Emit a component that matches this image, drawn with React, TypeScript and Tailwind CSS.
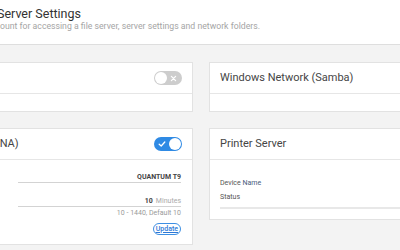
import React from "react";

const Toggle = ({ on }: { on: boolean }) => {
  if (on) {
    return (
      <div className="flex items-center w-[28px] h-[14px] rounded-full bg-[#2f8ae4] px-[1px]">
        <svg viewBox="0 0 10 10" className="w-[8px] h-[8px] ml-[3px]" fill="none">
          <path d="M1.5 5.2 L4 7.5 L8.5 2.5" stroke="#fff" strokeWidth="1.6" strokeLinecap="round" strokeLinejoin="round" />
        </svg>
        <div className="ml-auto w-[12px] h-[12px] rounded-full bg-white" />
      </div>
    );
  }
  return (
    <div className="flex items-center w-[28px] h-[14px] rounded-full bg-[#cdcdcd] px-[1px]">
      <div className="w-[12px] h-[12px] rounded-full bg-white" />
      <svg viewBox="0 0 10 10" className="w-[7px] h-[7px] ml-[3px]" fill="none">
        <path d="M2 2 L8 8 M8 2 L2 8" stroke="#fff" strokeWidth="1.8" strokeLinecap="round" />
      </svg>
    </div>
  );
};

const CardHeader = ({ title, toggle }: { title: string; toggle?: boolean }) => (
  <div className="flex items-center h-[31px] px-[10px] border-b border-[#e6e6e6]">
    <span className="text-[11px] text-[#454545] whitespace-nowrap">{title}</span>
    {toggle !== undefined && (
      <div className="ml-auto">
        <Toggle on={toggle} />
      </div>
    )}
  </div>
);

export default function App() {
  return (
    <div
      className="w-[400px] h-[250px] overflow-hidden bg-[#f3f3f3]"
      style={{ fontFamily: "Roboto, 'Liberation Sans', sans-serif" }}
    >
      {/* Page header */}
      <div className="h-[45px] bg-white border-b border-[#dedede] pt-[6px]">
        <div className="-ml-[3px] text-[12.5px] leading-[15px] text-[#333] whitespace-nowrap">
          Server Settings
        </div>
        <div className="grid grid-cols-[0px_auto] text-[8.7px] leading-[10px] text-[#a5a5a5] whitespace-nowrap">
          <span className="justify-self-end">Set up the user acc</span>
          <span>ount for accessing a file server, server settings and network folders.</span>
        </div>
      </div>

      {/* Cards */}
      <div className="-ml-[95px] pt-[17px] grid grid-cols-[288px_293px] gap-4 items-start">
        {/* FTP */}
        <div className="bg-white border border-[#e2e2e2]">
          <CardHeader title="FTP Server" toggle={false} />
          <div className="h-[17px]" />
        </div>

        {/* Samba */}
        <div className="bg-white border border-[#e2e2e2]">
          <CardHeader title="Windows Network (Samba)" />
          <div className="h-[17px]" />
        </div>

        {/* DLNA */}
        <div className="bg-white border border-[#e2e2e2]">
          <CardHeader title="Media Server (DLNA)" toggle={true} />
          <div className="px-[11px] pt-[8px] pb-[9px] text-[7px]">
            <div className="flex">
              <span className="w-[101px] self-end pb-[1px] text-[#666]">Server Name</span>
              <div className="flex-1 h-[15px] flex items-end justify-end pb-[1px] border-b border-[#d3d3d3]">
                <span className="font-bold text-[#444] leading-[7px]">QUANTUM T9</span>
              </div>
            </div>
            <div className="flex mt-[10px]">
              <span className="w-[101px] self-end pb-[1px] text-[#666]">Scan Interval</span>
              <div className="flex-1 h-[14px] flex items-end justify-end pb-[1px] border-b border-[#d3d3d3]">
                <span className="font-bold text-[#444] leading-[7px]">10</span>
                <span className="ml-[3px] text-[#aaa] leading-[7px]">Minutes</span>
              </div>
            </div>
            <div className="mt-[2px] text-right leading-[8px] text-[#9a9a9a]">10 - 1440, Default 10</div>
            <div className="flex justify-end mt-[6px]">
              <button className="h-[12px] px-[2px] rounded-full border-[1.5px] border-[#3d8fe3] text-[7px] leading-none text-[#2d78d6] font-medium underline">
                Update
              </button>
            </div>
          </div>
        </div>

        {/* Printer */}
        <div className="bg-white border border-[#e2e2e2]">
          <CardHeader title="Printer Server" />
          <div className="px-[10px] pt-[16px] pb-[10px] text-[7px]">
            <div className="leading-[14px] text-[#555]">
              Device <span className="text-[#465a7a]">Name</span>
            </div>
            <div className="leading-[14px] text-[#555]">Status</div>
            <div className="mt-[3px] border-b-2 border-[#e8e8e8]" />
          </div>
        </div>
      </div>
    </div>
  );
}
